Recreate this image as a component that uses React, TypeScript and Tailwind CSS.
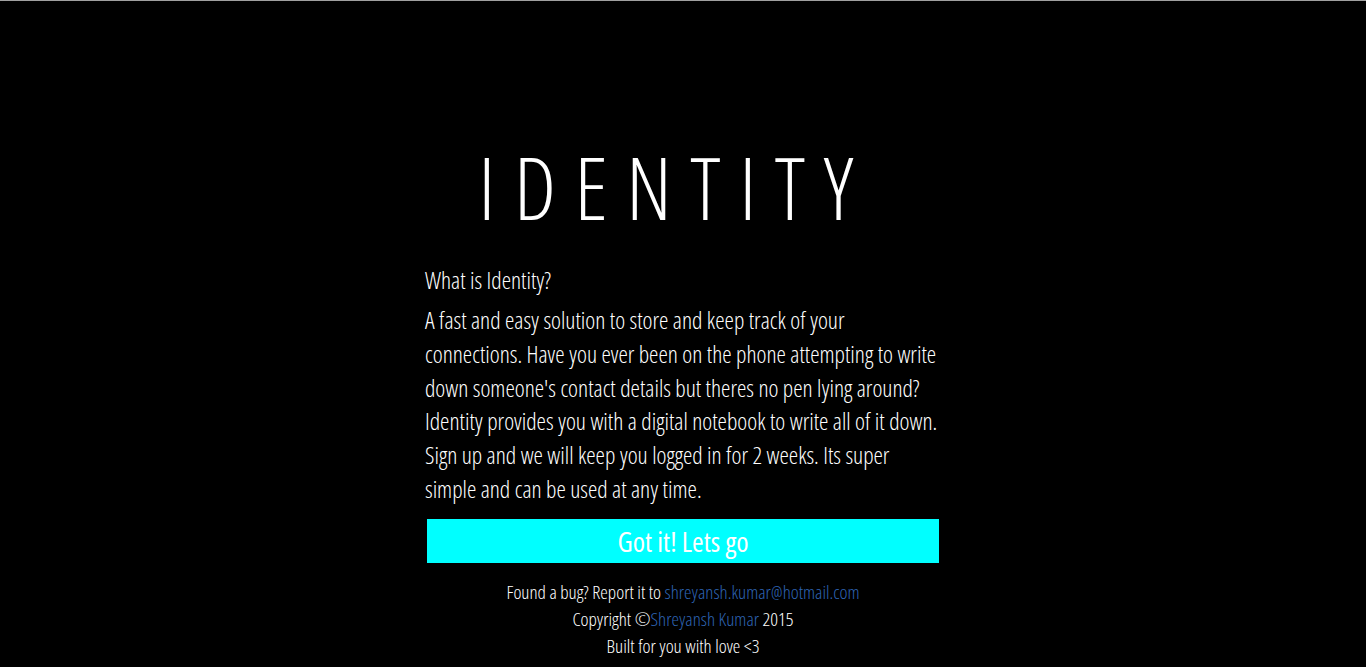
export default function App() {
  return (
    <div className="min-h-[667px] bg-black border-t border-[#a0a0a0] text-white font-['Open_Sans'] font-stretch-[75%] font-light">
      <div className="pt-[136px] pr-[16px] text-center">
        <h1 className="text-[86px] leading-[100px] font-light tracking-[18.5px]">IDENTITY</h1>
      </div>
      <div className="mx-auto w-[516px] mt-[28px]">
        <h4 className="text-[23.7px] leading-[30px]">What is Identity?</h4>
        <p className="mt-[9px] text-[23.7px] leading-[33.8px]">
          A fast and easy solution to store and keep track of your connections. Have you ever been on the phone attempting to write down someone's contact details but theres no pen lying around? Identity provides you with a digital notebook to write all of it down. Sign up and we will keep you logged in for 2 weeks. Its super simple and can be used at any time.
        </p>
        <button className="mt-[12px] mx-[2px] w-[512px] h-[44px] bg-[#00ffff] text-white text-[28px] font-normal leading-[44px]">
          Got it! Lets go
        </button>
      </div>
      <div className="mt-[16px] text-center text-[19px] leading-[27px]">
        <p>Found a bug? Report it to <a className="text-[#2e64b4]">shreyansh.kumar@hotmail.com</a></p>
        <p>Copyright ©<a className="text-[#2e64b4]">Shreyansh Kumar</a> 2015</p>
        <p>Built for you with love &lt;3</p>
      </div>
    </div>
  );
}
